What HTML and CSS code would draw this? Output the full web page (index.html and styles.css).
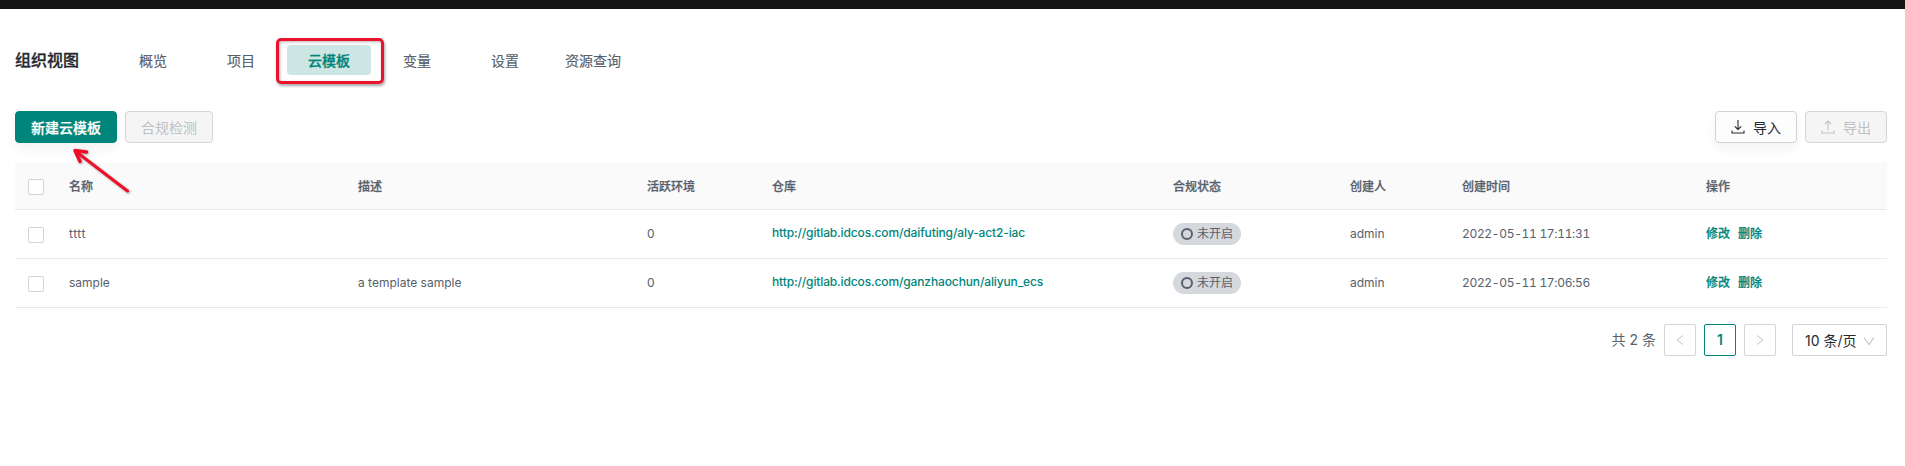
FILE: index.html
```html
<!DOCTYPE html>
<html lang="zh-CN">
<head>
<meta charset="utf-8">
<title>云模板</title>
<link rel="stylesheet" href="styles.css">
</head>
<body>
<div class="topbar"></div>
<main class="page">
  <header class="header">
    <h1 class="title">组织视图</h1>
    <nav class="tabs">
      <a class="tab">概览</a>
      <a class="tab">项目</a>
      <a class="tab active">云模板<span class="highlight"></span></a>
      <a class="tab">变量</a>
      <a class="tab">设置</a>
      <a class="tab">资源查询</a>
    </nav>
  </header>
  <div class="toolbar">
    <button class="btn primary">新建云模板
      <svg class="pointer" width="68" height="56" viewBox="0 0 68 56" fill="none" stroke="#f00f2b" stroke-linecap="round" stroke-linejoin="round"><path stroke-width="3" d="M60.500 48L9.500 9"/><path stroke-width="3.500" d="M19.500 9L8 7.500L13 18.500"/></svg>
    </button>
    <button class="btn disabled">合规检测</button>
    <span class="spacer"></span>
    <button class="btn plain"><svg class="icon" width="14" height="14" viewBox="0 0 14 14" fill="none" stroke="currentColor" stroke-width="1.1"><path d="M7 0V9.500M3.800 6.300L7 9.500L10.200 6.300M1 10.500V13H13V10.500"/></svg><span>导入</span></button>
    <button class="btn disabled"><svg class="icon" width="14" height="14" viewBox="0 0 14 14" fill="none" stroke="currentColor" stroke-width="1.1"><path d="M7 10.300V1M3.800 4.200L7 1L10.200 4.200M1 10.500V13H13V10.500"/></svg><span>导出</span></button>
  </div>
  <section class="table">
    <div class="row head">
      <span><i class="check"></i></span><span>名称</span><span>描述</span><span>活跃环境</span><span>仓库</span><span>合规状态</span><span>创建人</span><span>创建时间</span><span>操作</span>
    </div>
    <div class="row">
      <span><i class="check"></i></span><span class="name-spaced">tttt</span><span></span><span>0</span><span><a class="link repo">http://gitlab.idcos.com/daifuting/aly-act2-iac</a></span><span><b class="badge"><i class="ring"></i>未开启</b></span><span>admin</span><span class="time">2022-05-11 17:11:31</span><span class="actions"><a class="link">修改</a><a class="link">删除</a></span>
    </div>
    <div class="row">
      <span><i class="check"></i></span><span>sample</span><span>a template sample</span><span>0</span><span><a class="link repo">http://gitlab.idcos.com/ganzhaochun/aliyun_ecs</a></span><span><b class="badge"><i class="ring"></i>未开启</b></span><span>admin</span><span class="time">2022-05-11 17:06:56</span><span class="actions"><a class="link">修改</a><a class="link">删除</a></span>
    </div>
  </section>
  <footer class="pagination">
    <span class="total">共 2 条</span>
    <a class="page-btn"><svg width="10" height="12" viewBox="0 0 10 12" fill="none" stroke="currentColor"><path d="M8 1.500L2 6L8 10.500"/></svg></a>
    <a class="page-btn current">1</a>
    <a class="page-btn"><svg width="10" height="12" viewBox="0 0 10 12" fill="none" stroke="currentColor"><path d="M2 1.500L8 6L2 10.500"/></svg></a>
    <div class="select">10 条/页<svg width="12" height="10" viewBox="0 0 12 10" fill="none" stroke="#c0c2c5" stroke-width="1.1"><path d="M1 1.500L6 8.500L11 1.500"/></svg></div>
  </footer>
</main>
</body>
</html>
```
FILE: styles.css
```css
* { box-sizing: border-box; }
body {
  margin: 0;
  height: 466px;
  overflow: hidden;
  background: #fff;
  color: #57606c;
  font: 12px/20px Inter, "Noto Sans CJK SC", sans-serif;
}
.topbar { height: 9px; background: #141414; }
.page { padding: 36px 18px 0 15px; }
.header { display: flex; height: 30px; align-items: center; }
.title { margin: 0; width: 96px; font-size: 16px; line-height: 24px; font-weight: 500; color: #24292f; -webkit-text-stroke: .3px; }
.tabs { display: flex; gap: 4px; }
.tab { position: relative; width: 84px; height: 30px; line-height: 31px; border-radius: 4px; font-size: 14px; text-align: center; -webkit-text-stroke: .15px; }
.active { background: #cce6e4; color: #00857a; font-weight: 500; -webkit-text-stroke: .3px; }
.highlight {
  position: absolute;
  inset: -7px -13px -9px -11px;
  border: 3px solid #e9132b;
  border-radius: 5px;
  box-shadow: 1px 2px 3px rgba(0, 0, 0, .35), inset 1px 1px 3px rgba(0, 0, 0, .3);
}
.toolbar { display: flex; gap: 8px; height: 32px; margin-top: 36px; }
.spacer { flex: 1; }
.btn {
  position: relative;
  display: flex;
  align-items: center;
  justify-content: center;
  gap: 8px;
  padding: 2px 15px 0;
  border: 1px solid #d4d6d9;
  border-radius: 4px;
  font: 14px/22px Inter, "Noto Sans CJK SC", sans-serif;
}
.primary { width: 102px; background: #00857a; border-color: #00857a; color: #fff; font-weight: 500; -webkit-text-stroke: .25px; box-shadow: 0 6px 12px rgba(0, 0, 0, .05); }
.disabled { min-width: 82px; background: #f5f5f5; color: #bfc1c3; }
.plain { width: 82px; background: #fdfdfe; color: #24292f; border-color: #cfd2d6; box-shadow: 0 6px 12px rgba(0, 0, 0, .05); }
.icon { margin-top: -2px; flex: none; }
.pointer { position: absolute; left: 51px; top: 31px; z-index: 1; overflow: visible; filter: drop-shadow(1px 1px 1px rgba(0, 0, 0, .35)); }
.table { margin-top: 20px; }
.row {
  display: grid;
  grid-template-columns: 54px 289px 289px 125px 401px 177px 112px 244px 181px;
  align-items: center;
  height: 49px;
  border-bottom: 1px solid #e8e9ea;
}
.head { height: 47px; padding-top: 1px; background: #fafafa; font-weight: 500; -webkit-text-stroke: .25px; }
.check { display: block; width: 16px; height: 16px; margin: 1px 0 0 13px; border: 1px solid #d2d4d6; border-radius: 2px; background: #fff; }
.link { color: #00857a; font-weight: 500; }
.actions .link { -webkit-text-stroke: .25px; }
.repo { position: relative; top: -1.500px; letter-spacing: -.13px; }
.name-spaced { letter-spacing: .5px; }
.time { letter-spacing: -.33px; font-feature-settings: "tnum"; }
.badge { display: flex; align-items: center; gap: 4px; width: 68px; height: 22px; padding-left: 8px; border-radius: 11px; background: #d5d8dd; font-weight: 400; }
.ring { width: 12px; height: 12px; border: 2px solid #57606c; border-radius: 50%; }
.actions { display: flex; gap: 8px; }
.pagination { display: flex; gap: 8px; height: 32px; margin-top: 16px; justify-content: flex-end; font-size: 14px; line-height: 30px; }
.page-btn { display: flex; width: 32px; align-items: center; justify-content: center; border: 1px solid #d4d6d9; border-radius: 2px; color: #c0c2c5; }
.current { border-color: #00857a; color: #00857a; font-weight: 600; }
.total { margin-top: 1px; }
.select { display: flex; width: 95px; margin-left: 8px; padding: 1px 11px 0 12px; align-items: center; justify-content: space-between; border: 1px solid #cfd2d6; border-radius: 2px; color: #24292f; white-space: nowrap; }
```
